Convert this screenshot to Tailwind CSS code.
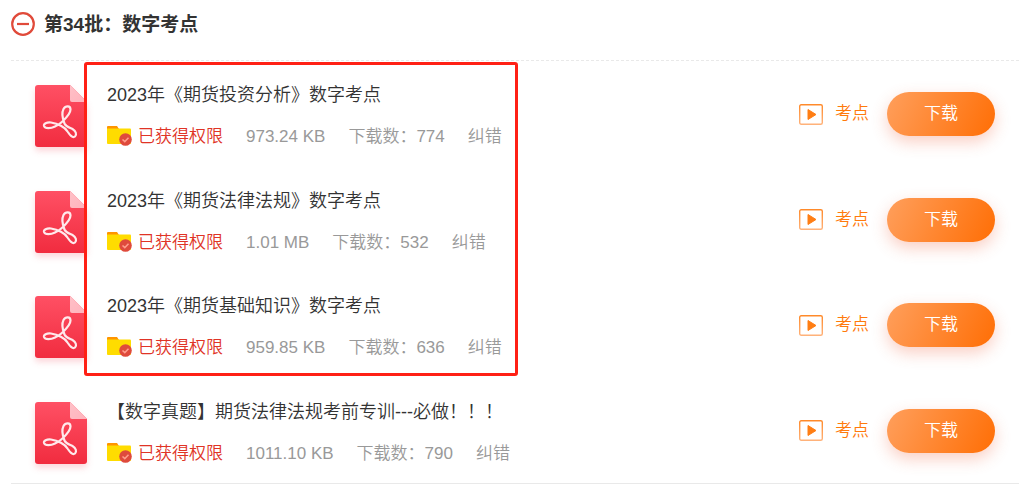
<!DOCTYPE html>
<html lang="zh-CN">
<head>
  <meta charset="UTF-8" />
  <meta name="viewport" content="width=device-width, initial-scale=1.0" />
  <title>数字考点</title>
  <script src="https://cdn.jsdelivr.net/npm/@tailwindcss/browser@4"></script>
</head>
<body class="bg-white font-['Liberation_Sans','Noto_Sans_CJK_SC',sans-serif] font-[350] text-[#333]">
  <!-- shared icons -->
  <svg class="absolute size-0" aria-hidden="true">
    <defs>
      <linearGradient id="pdfFill" x1="0" y1="0" x2="0" y2="1">
        <stop offset="0" stop-color="#ff5064" />
        <stop offset="1" stop-color="#f12c3f" />
      </linearGradient>
      <linearGradient id="foldFill" x1="0" y1="0" x2="1" y2="1">
        <stop offset="0" stop-color="#ffc0c7" />
        <stop offset="1" stop-color="#ffb3bc" />
      </linearGradient>
      <linearGradient id="playLine" x1="0" y1="0" x2="0" y2="1">
        <stop offset="0" stop-color="#ff8a2a" />
        <stop offset="1" stop-color="#ffb27a" />
      </linearGradient>
    </defs>
    <symbol id="pdf" viewBox="0 0 52 62">
      <path d="M3 0H35L52 17V59a3 3 0 0 1-3 3H3a3 3 0 0 1-3-3V3a3 3 0 0 1 3-3Z" fill="url(#pdfFill)" />
      <path d="M35 0L52 17H37a2 2 0 0 1-2-2Z" fill="url(#foldFill)" />
      <path d="M28 36C32 32 35.500 28.500 35.500 24.500C35.500 20.500 30.500 20.500 28.500 24C26.500 28 27.500 33.500 29.500 38.500C31 42 34.500 42.500 37.500 44C41 46 42 49.500 40 51.500C37.500 53.500 34.500 49.500 32.500 46.500C30 42 23 38.500 16 37.500C11.500 37 8.500 39 9 41C10 44 16 43.500 20 41.500C23.500 40 25.500 38.500 28 36Z" fill="none" stroke="#ffe9eb" stroke-width="2.200" stroke-linejoin="round" />
    </symbol>
    <symbol id="folder" viewBox="0 0 25 20">
      <path d="M0 1a1 1 0 0 1 1-1H10L12 3V7H0Z" fill="#ff9500" />
      <path d="M0 2.500H23a1 1 0 0 1 1 1V17a1 1 0 0 1-1 1H1a1 1 0 0 1-1-1Z" fill="#ffdc00" />
      <circle cx="18.500" cy="13.500" r="6.300" fill="#df4a3c" />
      <path d="M15.500 13.500L17.800 15.600L21.500 11.800" fill="none" stroke="#ff9d8c" stroke-width="1.500" />
    </symbol>
    <symbol id="play" viewBox="0 0 24 21">
      <rect x="0.700" y="0.700" width="22.600" height="19.600" rx="1.500" fill="none" stroke="url(#playLine)" stroke-width="1.400" />
      <path d="M9 5.500L17 10.500L9 15.500Z" fill="#ff7e14" stroke="#ff7e14" stroke-linejoin="round" />
    </symbol>
  </svg>

  <section class="ml-[11px] mr-[7px]">
    <header class="flex h-[61px] items-start gap-[9px] border-b border-dashed border-[#e9e9e9] pt-[11px]">
      <button type="button" aria-label="收起" class="mt-px size-6">
        <svg viewBox="0 0 24 24" class="size-6" fill="none" stroke="#e04a3a" stroke-width="2.200">
          <circle cx="12" cy="12" r="10.800" />
          <path d="M6 12H18" />
        </svg>
      </button>
      <h2 class="text-[19px] leading-7 font-bold">第34批：数字考点</h2>
    </header>

    <ul id="list" class="relative border-b border-[#e9e9e9]">
      <li aria-hidden="true" class="pointer-events-none absolute top-px left-[73px] z-10 h-[314px] w-[434px] rounded-[3px] border-3 border-[#ff2015]"></li>
    </ul>
  </section>

  <script>
    const files = [
      { title: '2023年《期货投资分析》数字考点', size: '973.24 KB', count: 774 },
      { title: '2023年《期货法律法规》数字考点', size: '1.01 MB', count: 532 },
      { title: '2023年《期货基础知识》数字考点', size: '959.85 KB', count: 636 },
      { title: '【数字真题】期货法律法规考前专训---必做！！！', size: '1011.10 KB', count: 790 }
    ];

    const rows = files.map(file => `
      <li class="flex items-center px-6 odd:h-[105px] even:h-[106px]">
        <svg class="mt-1 h-[62px] w-[52px] shrink-0 drop-shadow-[0_4px_3px_#f12c3f30]"><use href="#pdf" /></svg>
        <div class="ml-5 flex-1 pt-[2px]">
          <h3 class="text-[18px] leading-7">${file.title}</h3>
          <div class="mt-4 flex items-center gap-[23px] text-[17px] leading-6 text-[#999]">
            <span class="flex items-center gap-[6px] text-[#e03426]">
              <svg class="mb-[2px] h-5 w-[25px]"><use href="#folder" /></svg>已获得权限
            </span>
            <span>${file.size}</span>
            <span>下载数：${file.count}</span>
            <a href="#">纠错</a>
          </div>
        </div>
        <a href="#" class="flex items-center gap-3 text-[17px] text-[#ff7a0c]">
          <svg class="h-[21px] w-6"><use href="#play" /></svg>考点
        </a>
        <button type="button" class="ml-[18px] h-11 w-[108px] rounded-full bg-linear-[115deg,#ff9f5c,#ff6e05] text-[17px] text-white shadow-[0_6px_16px_#f0603c4d]">下载</button>
      </li>`);
    document.getElementById('list').insertAdjacentHTML('beforeend', rows.join(''));
  </script>
</body>
</html>
